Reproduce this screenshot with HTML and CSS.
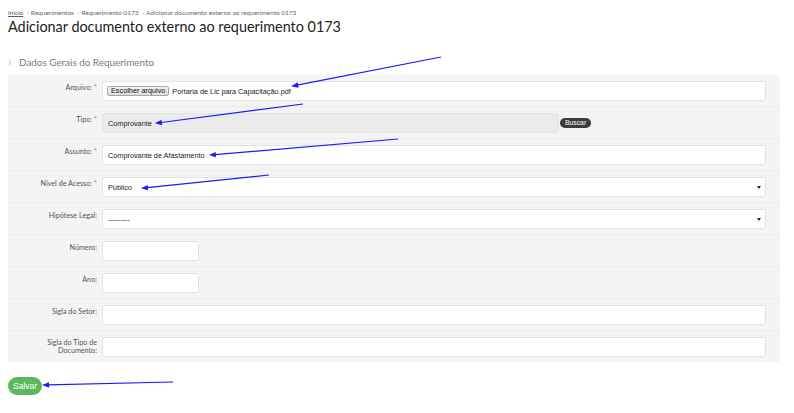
FILE: index.html
```html
<!DOCTYPE html>
<html lang="pt">
<head>
<meta charset="utf-8">
<title>Adicionar documento externo</title>
<link rel="stylesheet" href="styles.css">
</head>
<body>
<div class="page">
  <nav class="crumbs">
    <a href="#" class="crumb-link">Início</a>
    <span class="sep">›</span><span>Requerimentos</span>
    <span class="sep">›</span><span>Requerimento 0173</span>
    <span class="sep">›</span><span>Adicionar documento externo ao requerimento 0173</span>
  </nav>
  <h1 class="title">Adicionar documento externo ao requerimento 0173</h1>
  <div class="section-title"><span class="chev">›</span>Dados Gerais do Requerimento</div>

  <div class="panel">
    <div class="row">
      <div class="lbl">Arquivo: <span class="req">*</span></div>
      <div class="field">
        <div class="input file-input"><span class="file-btn">Escolher arquivo</span><span class="file-name">Portaria de Lic para Capacitação.pdf</span></div>
      </div>
    </div>
    <div class="row">
      <div class="lbl">Tipo: <span class="req">*</span></div>
      <div class="field field-tipo">
        <div class="input input-disabled">Comprovante</div>
        <span class="btn-buscar">Buscar</span>
      </div>
    </div>
    <div class="row">
      <div class="lbl">Assunto: <span class="req">*</span></div>
      <div class="field"><div class="input">Comprovante de Afastamento</div></div>
    </div>
    <div class="row">
      <div class="lbl">Nível de Acesso: <span class="req">*</span></div>
      <div class="field"><div class="input select">Público<span class="caret"></span></div></div>
    </div>
    <div class="row">
      <div class="lbl">Hipótese Legal:</div>
      <div class="field"><div class="input select">---------<span class="caret"></span></div></div>
    </div>
    <div class="row">
      <div class="lbl">Número:</div>
      <div class="field"><div class="input input-short"></div></div>
    </div>
    <div class="row">
      <div class="lbl">Ano:</div>
      <div class="field"><div class="input input-short"></div></div>
    </div>
    <div class="row">
      <div class="lbl">Sigla do Setor:</div>
      <div class="field"><div class="input"></div></div>
    </div>
    <div class="row">
      <div class="lbl lbl-wrap">Sigla do Tipo de Documento:</div>
      <div class="field"><div class="input"></div></div>
    </div>
  </div>

  <div class="actions"><span class="btn-save">Salvar</span></div>

  <svg class="annotations" width="794" height="413" viewBox="0 0 794 413">
    <g stroke="#1a1aff" stroke-width="1.2" fill="none">
      <line x1="441" y1="57" x2="297" y2="85.2"/>
      <line x1="303" y1="104" x2="161" y2="122.5"/>
      <line x1="398" y1="139" x2="215" y2="154.6"/>
      <line x1="269" y1="175" x2="147" y2="187.6"/>
      <line x1="173" y1="382" x2="48" y2="384.8"/>
    </g>
    <g fill="#1a1aff">
      <polygon points="291,86.3 297.8,82.3 298.6,87.7"/>
      <polygon points="155,123.3 161.5,119.8 162.2,125.2"/>
      <polygon points="209,155.1 215.6,151.9 216,157.3"/>
      <polygon points="141,188.2 147.6,184.9 148.1,190.3"/>
      <polygon points="42,385 49,382.3 49.1,387.7"/>
    </g>
  </svg>
</div>
</body>
</html>
```

FILE: styles.css
```css
* { box-sizing: border-box; }

html, body {
  margin: 0;
  padding: 0;
  background: #ffffff;
}

.page {
  position: relative;
  width: 794px;
  height: 413px;
  padding: 8px 14px 0 8px;
  font-family: Lato, "Open Sans", sans-serif;
  color: #333;
}

.crumbs {
  font-size: 6.5px;
  color: #666;
  line-height: 9px;
  height: 9px;
}

.crumb-link {
  color: #6b4f7a;
  text-decoration: underline;
}

.sep {
  color: #999;
  margin: 0 2px;
}

.title {
  margin: 1px 0 0 0;
  font-size: 14.4px;
  font-weight: 400;
  line-height: 18px;
  color: #222;
}

.section-title {
  margin-top: 19px;
  font-size: 9.9px;
  line-height: 14px;
  color: #7a7a7a;
  display: flex;
  align-items: center;
}

.chev {
  color: #b5b5b5;
  font-size: 11px;
  width: 11px;
  display: inline-block;
}

.panel {
  margin-top: 6px;
  background: #f4f4f4;
  border-radius: 3px;
  width: 772px;
}

.row {
  display: flex;
  padding: 6px 14px 5px 0;
  border-top: 1px solid #ebebeb;
}

.row:first-child {
  border-top: none;
}

.lbl {
  width: 94px;
  flex: none;
  text-align: right;
  padding-right: 5px;
  padding-top: 3px;
  font-size: 7.2px;
  line-height: 8px;
  color: #555;
  white-space: nowrap;
}

.lbl-wrap {
  white-space: normal;
  padding-left: 36px;
  padding-top: 2px;
}

.req {
  color: #d9534f;
}

.field {
  flex: 1;
  display: flex;
  align-items: center;
}

.input {
  position: relative;
  width: 100%;
  height: 20px;
  background: #ffffff;
  border: 1px solid #e2e2e2;
  border-radius: 3px;
  font-family: "Liberation Sans", Arial, sans-serif;
  font-size: 7.3px;
  color: #222;
  display: flex;
  align-items: center;
  padding-left: 5px;
}

.input-disabled {
  width: 457px;
  background: #ebebeb;
  border-color: #e4e4e4;
}

.input-short {
  width: 97px;
}

.btn-buscar {
  margin-left: 1px;
  background: #3c3c3c;
  color: #fff;
  font-family: "Liberation Sans", Arial, sans-serif;
  font-size: 6.8px;
  line-height: 10px;
  height: 10px;
  padding: 0 5px;
  border-radius: 5px;
}

.file-input {
  padding-left: 4px;
}

.file-btn {
  display: inline-block;
  height: 10px;
  line-height: 8px;
  padding: 0 3px;
  border: 1px solid #a7a7a7;
  border-radius: 2px;
  background: linear-gradient(#f2f2f2, #dedede);
  color: #111;
}

.file-name {
  margin-left: 3px;
}

.caret {
  position: absolute;
  right: 4px;
  top: 8px;
  width: 0;
  height: 0;
  border-left: 2px solid transparent;
  border-right: 2px solid transparent;
  border-top: 3px solid #222;
}

.actions {
  margin-top: 11px;
}

.btn-save {
  display: inline-block;
  background: #5cb85c;
  color: #fff;
  font-family: "Liberation Sans", Arial, sans-serif;
  font-size: 8.5px;
  line-height: 18px;
  height: 18px;
  padding: 0 5px;
  border-radius: 9px;
}

.annotations {
  position: absolute;
  left: 0;
  top: 0;
  pointer-events: none;
}
```
